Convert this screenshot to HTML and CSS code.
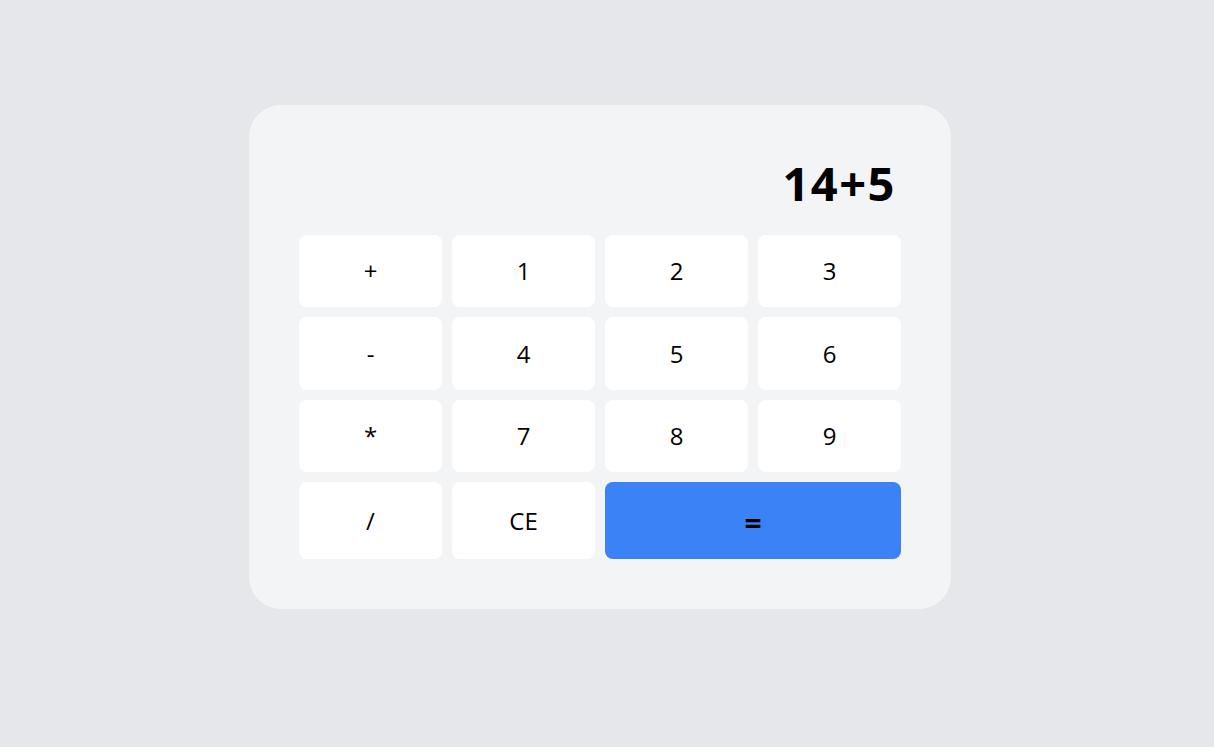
FILE: index.html
```html
<!DOCTYPE html>
<html lang="en">
<head>
<meta charset="utf-8">
<title>Calculator</title>
<link rel="stylesheet" href="styles.css">
</head>
<body>
<main class="page">
  <section class="calc">
    <div class="display">14+5</div>
    <div class="keys">
      <button class="key">+</button>
      <button class="key">1</button>
      <button class="key">2</button>
      <button class="key">3</button>
      <button class="key">-</button>
      <button class="key">4</button>
      <button class="key">5</button>
      <button class="key">6</button>
      <button class="key">*</button>
      <button class="key">7</button>
      <button class="key">8</button>
      <button class="key">9</button>
      <button class="key">/</button>
      <button class="key">CE</button>
      <button class="key key-equals">=</button>
    </div>
  </section>
</main>
</body>
</html>
```
FILE: styles.css
```css
* { box-sizing: border-box; }
html, body {
  margin: 0;
  padding: 0;
}
body {
  background: #e5e7eb;
  font-family: "Open Sans", "Noto Sans", sans-serif;
  color: #000;
}
.page {
  width: 1214px;
  height: 747px;
  padding-top: 105px;
  padding-left: 249px;
}
.calc {
  width: 702px;
  height: 504px;
  background: #f3f4f6;
  border-radius: 32px;
  padding: 50px;
}
.display {
  text-align: right;
  font-size: 47px;
  line-height: 48px;
  font-weight: 700;
  letter-spacing: 1.5px;
  padding-top: 4px;
  padding-right: 5px;
  margin-bottom: 28px;
}
.keys {
  display: grid;
  grid-template-columns: repeat(4, 143px);
  grid-template-rows: 72px 73px 72px 77px;
  gap: 10px;
}
.key {
  border: none;
  background: #fff;
  border-radius: 8px;
  font-family: inherit;
  font-size: 24px;
  line-height: 32px;
  color: #000;
  padding: 0;
  display: flex;
  align-items: center;
  justify-content: center;
}
.key-equals {
  grid-column: span 2;
  background: #3b82f6;
  font-weight: 700;
  font-size: 30px;
  padding-top: 4px;
}
```
